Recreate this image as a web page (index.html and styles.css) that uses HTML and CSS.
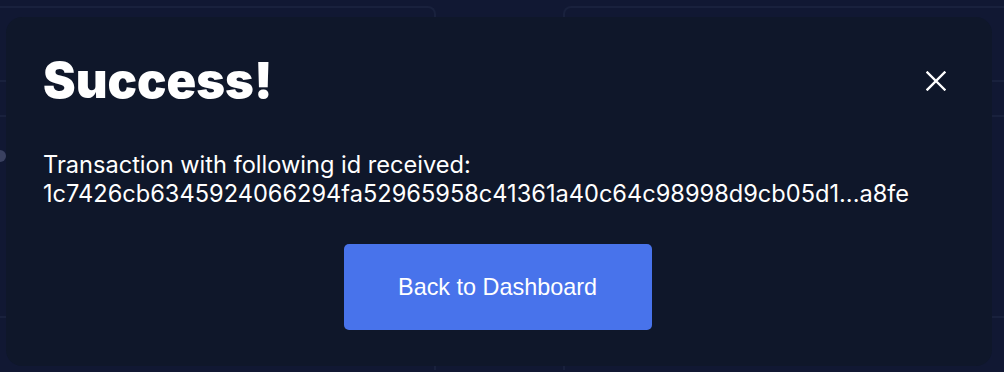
FILE: index.html
```html
<!DOCTYPE html>
<html>
<head>
    <meta charset="UTF-8">
    <meta name="viewport" content="width=device-width, initial-scale=1.0">
    <title>Success</title>
    <link rel="stylesheet" href="styles.css">
</head>
<body>
    <!-- dashboard behind the modal -->
    <div class="dashboard">
        <div class="panel panel-left">
            <div class="row"></div>
            <div class="row"></div>
            <div class="row tall"></div>
        </div>
        <div class="panel panel-right">
            <div class="row"></div>
            <div class="row"></div>
            <div class="row tall"></div>
        </div>
    </div>
    <span class="dot"></span>

    <!-- modal -->
    <div class="overlay">
        <div class="modal">
            <div class="modal-head">
                <h1>Success!</h1>
                <button class="close-btn" aria-label="Close">
                    <svg width="20" height="20" viewBox="0 0 20 20">
                        <path d="M1.5 1.5 L18.5 18.5 M18.5 1.5 L1.5 18.5" stroke="#fff" stroke-width="2.4" stroke-linecap="square"/>
                    </svg>
                </button>
            </div>
            <p class="msg">
                Transaction with following id received:<br>
                1c7426cb6345924066294fa52965958c41361a40c64c98998d9cb05d1...a8fe
            </p>
            <div class="actions">
                <button class="primary-btn">Back to Dashboard</button>
            </div>
        </div>
    </div>
</body>
</html>
```

FILE: styles.css
```css
html, body {
    margin: 0;
    height: 100%;
}
body {
    background: #111833;
    overflow: hidden;
    font-family: "Inter", "Noto Sans", sans-serif;
}
.dashboard {
    display: flex;
    gap: 127px;
    padding-top: 6px;
    margin-left: -16px;
    margin-right: -16px;
}
.panel {
    height: 362px;
    border: 2px solid #19213d;
    border-bottom: none;
    border-radius: 8px 8px 0 0;
}
.panel-left {
    flex: 0 0 448px;
}
.panel-right {
    flex: 1;
}
.row {
    height: 72px;
    border-bottom: 2px solid #19213d;
}
.row + .row {
    height: 33px;
}
.row.tall {
    height: 199px;
}
.dot {
    position: absolute;
    left: -6px;
    top: 150px;
    width: 12px;
    height: 12px;
    border-radius: 50%;
    background: #3a4160;
}
.overlay {
    position: absolute;
    inset: 0;
    padding: 17px 12px 6px 6px;
}
.modal {
    height: 100%;
    box-sizing: border-box;
    background: #0f172a;
    border-radius: 16px;
    padding: 33px 46px 0 37px;
    color: #fff;
}
.modal-head {
    display: flex;
    justify-content: space-between;
    align-items: center;
}
h1 {
    margin: 0;
    font-size: 49px;
    font-weight: 900;
    letter-spacing: 0;
    line-height: 62px;
}
.close-btn {
    background: none;
    border: none;
    padding: 0;
    width: 20px;
    height: 20px;
    cursor: pointer;
}
.close-btn svg {
    display: block;
}
.msg {
    margin: 38px 0 0;
    font-size: 23.6px;
    line-height: 29px;
    font-weight: 400;
}
.actions {
    display: flex;
    justify-content: center;
    margin-top: 36px;
    padding-left: 6px;
}
.primary-btn {
    width: 308px;
    height: 86px;
    background: #4873eb;
    color: #fff;
    border: none;
    border-radius: 5px;
    font-family: "Liberation Sans", Arial, sans-serif;
    font-size: 23.4px;
    cursor: pointer;
}
```
